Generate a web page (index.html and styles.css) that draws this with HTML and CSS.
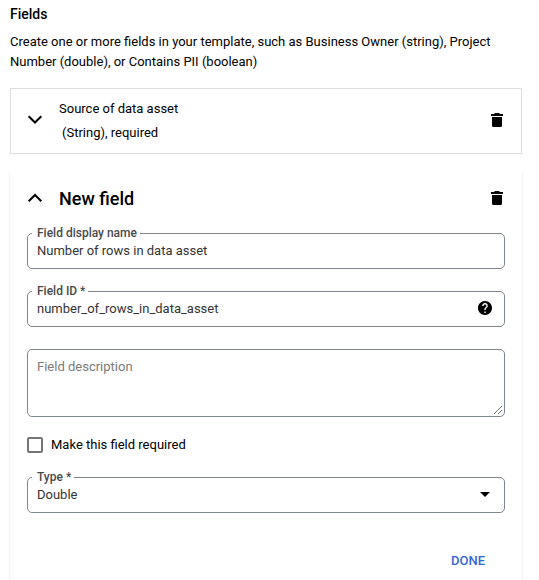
FILE: index.html
```html
<!DOCTYPE html>
<html lang="en">
<head>
<meta charset="utf-8">
<title>Fields</title>
<link rel="stylesheet" href="styles.css">
</head>
<body>
<main class="page">
  <h2 class="title">Fields</h2>
  <p class="intro">Create one or more fields in your template, such as Business Owner (string), Project Number (double), or Contains PII (boolean)</p>

  <section class="summary">
    <svg class="chevron" viewBox="0 0 16 10"><path d="M1.700 1.200 8 7.500l6.300-6.300"/></svg>
    <div class="summary-text">
      <div>Source of data asset</div>
      <div class="summary-type">(String), required</div>
    </div>
    <svg class="trash" viewBox="0 0 12 14"><path d="M0 1h3l1-1h4l1 1h3v2H0zM1 4h10v8.500q0 1.500-1.500 1.500h-7Q1 14 1 12.500z"/></svg>
  </section>

  <section class="editor">
    <header class="editor-head">
      <svg class="chevron" viewBox="0 0 16 10"><path d="M1.700 8.300 8 2l6.300 6.300"/></svg>
      <h3 class="editor-title">New field</h3>
      <svg class="trash" viewBox="0 0 12 14"><path d="M0 1h3l1-1h4l1 1h3v2H0zM1 4h10v8.500q0 1.500-1.500 1.500h-7Q1 14 1 12.500z"/></svg>
    </header>
    <div class="field">
      <span class="label">Field display name</span>
      <span class="value">Number of rows in data asset</span>
    </div>
    <div class="field">
      <span class="label">Field ID *</span>
      <span class="value">number_of_rows_in_data_asset</span>
      <svg class="help" viewBox="2 2 20 20"><path d="M12 2C6.480 2 2 6.480 2 12s4.480 10 10 10 10-4.480 10-10S17.520 2 12 2zm1 17h-2v-2h2v2zm2.070-7.750-.9.920C13.450 12.900 13 13.500 13 15h-2v-.5c0-1.100.45-2.100 1.170-2.830l1.240-1.260c.37-.36.590-.86.590-1.410 0-1.100-.9-2-2-2s-2 .9-2 2H8c0-2.210 1.790-4 4-4s4 1.790 4 4c0 .88-.36 1.680-.93 2.250z"/></svg>
    </div>
    <div class="field area">
      <span class="placeholder">Field description</span>
      <svg class="grip" viewBox="0 0 8 8"><path d="M0 8 8 0M4 8l4-4"/></svg>
    </div>
    <div class="check">
      <span class="box"></span>
      <span>Make this field required</span>
    </div>
    <div class="field type">
      <span class="label">Type *</span>
      <span class="value">Double</span>
      <svg class="caret" viewBox="0 0 10 5"><path d="M0 0h10L5 5z"/></svg>
    </div>
    <div class="actions"><span class="done">DONE</span></div>
  </section>
</main>
</body>
</html>
```

FILE: styles.css
```css
* { box-sizing: border-box; }
body {
  margin: 0;
  background: #fff;
  color: #000;
  font: 13px/20px Roboto, "Liberation Sans", sans-serif;
}
.page {
  display: flex;
  flex-direction: column;
  width: 512px;
  height: 580px;
  margin-left: 10px;
  padding-top: 4px;
}
.title { margin: 0; font-size: 14px; font-weight: 500; line-height: 20px; }
.intro { margin: 8px 0 16px; }
.summary {
  display: flex;
  align-items: center;
  height: 66px;
  padding: 0 18px 2px 16px;
  border: 1px solid #dedede;
}
.chevron { width: 16px; height: 10px; margin-right: 16px; flex: none; }
.chevron path { fill: none; stroke: #000; stroke-width: 2; }
.summary-text { padding-top: 2px; line-height: 24px; }
.summary-type { padding-left: 3px; }
.trash { width: 12px; height: 14px; margin-left: auto; flex: none; }
.editor {
  flex: 1;
  margin-top: 16px;
  padding: 0 17px;
  border-radius: 4px 4px 0 0;
  box-shadow: 0 1px 2px rgba(0, 0, 0, .15);
  clip-path: inset(-2px -3px 0);
}
.editor-head { display: flex; align-items: center; height: 56px; padding-right: 2px; }
.editor-title { margin: 0; padding-top: 2px; font-size: 18px; font-weight: 500; line-height: 24px; }
.field {
  position: relative;
  display: flex;
  align-items: center;
  height: 36px;
  margin-bottom: 22px;
  padding: 0 12px 0 9px;
  border: 1px solid #80868b;
  border-radius: 5px;
  color: #333;
}
.editor-head + .field { margin-top: 7px; }
.label {
  position: absolute;
  top: -9px;
  left: 4px;
  padding: 0 3px 0 5px;
  background: #fff;
  color: #4a4a4a;
  font-size: 12px;
  font-weight: 500;
  line-height: 16px;
}
.help { width: 14px; height: 14px; margin: 0 0 2px auto; color: #000; }
.help path { fill: #000; }
.area { height: 68px; align-items: flex-start; padding-top: 7px; margin-bottom: 16px; }
.placeholder { color: #7b7b7b; }
.grip { position: absolute; right: 2px; bottom: 2px; width: 8px; height: 8px; }
.grip path { fill: none; stroke: #555; stroke-width: .8; }
.check { display: flex; align-items: center; gap: 8px; height: 24px; margin-bottom: 20px; }
.box { width: 16px; height: 16px; border: 2px solid #757575; border-radius: 2px; }
.caret { width: 10px; height: 5px; margin: 0 2px 1px auto; }
.actions { display: flex; justify-content: flex-end; padding: 16px 20px 0 0; }
.type { margin-bottom: 22px; }
.done { color: #3367d6; font-weight: 500; }
```
